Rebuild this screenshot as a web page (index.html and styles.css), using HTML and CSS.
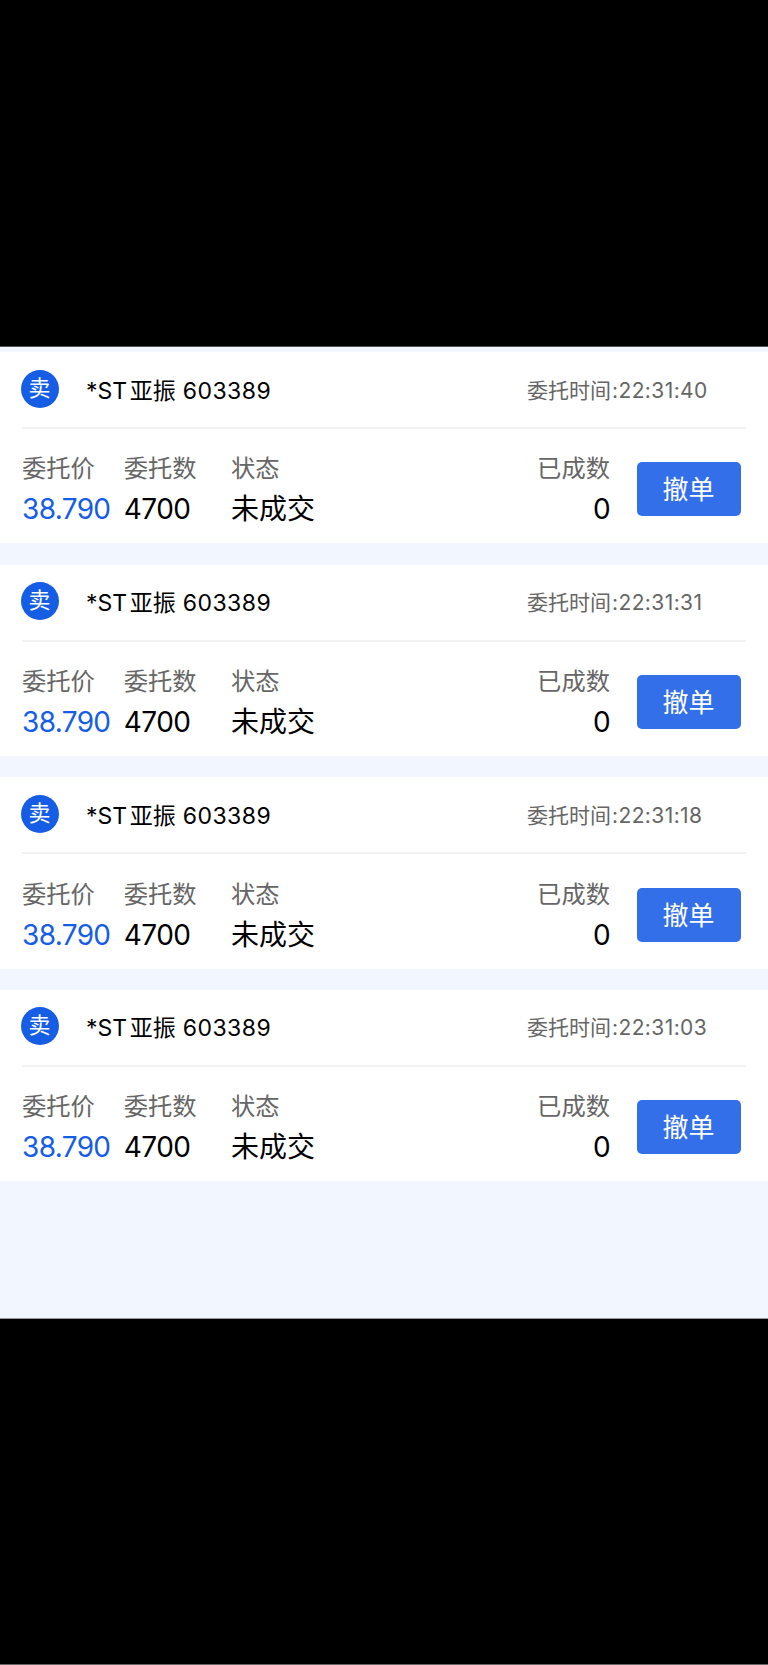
FILE: index.html
```
<!DOCTYPE html>
<html lang="zh-CN">
	<head>
		<meta charset="UTF-8">
		<title>委托撤单</title>
		<link rel="stylesheet" href="styles.css">
	</head>
	<body>
		<div class="order-con">

			<div class="order">
				<div class="order-top">
					<span class="tag">卖</span>
					<div class="name"><span>*ST</span><span class="cn">亚振</span><span class="code">603389</span></div>
					<div class="time">委托时间<span>:22:31:40</span></div>
				</div>
				<div class="order-info">
					<div class="item price"><p>委托价</p><b>38.790</b></div>
					<div class="item num"><p>委托数</p><b>4700</b></div>
					<div class="item status"><p>状态</p><b>未成交</b></div>
					<div class="item done"><p>已成数</p><b>0</b></div>
					<button class="cancel" type="button">撤单</button>
				</div>
			</div>

			<div class="order">
				<div class="order-top">
					<span class="tag">卖</span>
					<div class="name"><span>*ST</span><span class="cn">亚振</span><span class="code">603389</span></div>
					<div class="time">委托时间<span>:22:31:31</span></div>
				</div>
				<div class="order-info">
					<div class="item price"><p>委托价</p><b>38.790</b></div>
					<div class="item num"><p>委托数</p><b>4700</b></div>
					<div class="item status"><p>状态</p><b>未成交</b></div>
					<div class="item done"><p>已成数</p><b>0</b></div>
					<button class="cancel" type="button">撤单</button>
				</div>
			</div>

			<div class="order">
				<div class="order-top">
					<span class="tag">卖</span>
					<div class="name"><span>*ST</span><span class="cn">亚振</span><span class="code">603389</span></div>
					<div class="time">委托时间<span>:22:31:18</span></div>
				</div>
				<div class="order-info">
					<div class="item price"><p>委托价</p><b>38.790</b></div>
					<div class="item num"><p>委托数</p><b>4700</b></div>
					<div class="item status"><p>状态</p><b>未成交</b></div>
					<div class="item done"><p>已成数</p><b>0</b></div>
					<button class="cancel" type="button">撤单</button>
				</div>
			</div>

			<div class="order">
				<div class="order-top">
					<span class="tag">卖</span>
					<div class="name"><span>*ST</span><span class="cn">亚振</span><span class="code">603389</span></div>
					<div class="time">委托时间<span>:22:31:03</span></div>
				</div>
				<div class="order-info">
					<div class="item price"><p>委托价</p><b>38.790</b></div>
					<div class="item num"><p>委托数</p><b>4700</b></div>
					<div class="item status"><p>状态</p><b>未成交</b></div>
					<div class="item done"><p>已成数</p><b>0</b></div>
					<button class="cancel" type="button">撤单</button>
				</div>
			</div>

		</div>
	</body>
</html>
```
FILE: styles.css
```
* { box-sizing: border-box; margin: 0; padding: 0;}
html { background: #000;}
body { height: 1665px; padding-top: 346px; border-bottom: 1px solid #666; font-family: Inter, "Noto Sans CJK SC", sans-serif; color: #000;}

.order-con { height: 973px; padding-top: 5px; background: #f2f6ff; border-top: 1px solid #555; border-bottom: 1px solid #999ba1;}
.order { height: 191.33px; margin-bottom: 21.33px; padding: 0 22px; background: #fff;}

.order-top { display: flex; align-items: center; height: 77px; border-bottom: 2px solid #f3f3f3;}
.tag { width: 38px; height: 38px; margin: -2px 0 0 -0.6px; padding-right: 2px; border-radius: 50%; background: #165de6; color: #fff; font-size: 22px; line-height: 37px; text-align: center;}
.name { display: flex; margin-left: 26.6px; padding-top: 2px; font-size: 23px; line-height: 34px;}
.name .cn { margin-left: 2.5px;}
.name .code { margin-left: 7px; letter-spacing: 0.5px;}
.time { width: 219px; margin-left: auto; padding-top: 2px; font-size: 21px; line-height: 34px; color: #666; white-space: nowrap;}
.time span { margin-left: 1px; letter-spacing: 0.4px;}

.order-info { display: flex; padding-top: 21.4px;}
.item p { font-size: 24.3px; line-height: 36px; color: #666;}
.item b { display: block; margin-top: 2.1px; font-size: 28px; line-height: 42px; font-weight: 400;}
.price { width: 101.7px;}
.price b { color: #165de6; letter-spacing: -0.65px;}
.num { width: 107.3px;}
.num b { letter-spacing: -0.5px;}
.status { flex: 1;}
.done { text-align: right;}
.done b { letter-spacing: -0.7px;}
.cancel { width: 104px; height: 54px; margin: 12px 5px 0 27px; padding: 1px 1px 0 0; border: 0; border-radius: 5px; background: #326fe8; color: #fff; font-family: inherit; font-size: 26px; line-height: 53px;}
```
